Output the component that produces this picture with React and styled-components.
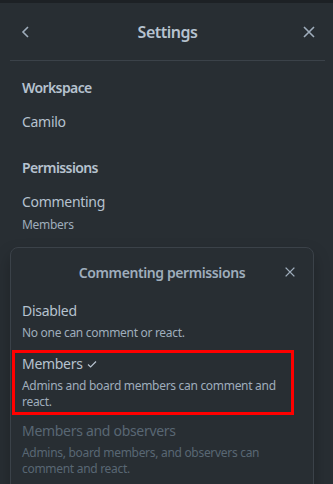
import React from 'react'
import styled, { createGlobalStyle } from 'styled-components'

const GlobalStyle = createGlobalStyle`
  body {
    margin: 0;
    background: #282e33;
    font-family: "Noto Sans", "Open Sans", sans-serif;
    color: #b6c2cf;
  }
`

const Panel = styled.div`
  width: 333px;
  height: 484px;
  overflow: hidden;
  background: #282e33;
  border-top: 3px solid #1d2125;
  box-sizing: border-box;
`

const Header = styled.div`
  height: 57px;
  display: flex;
  align-items: center;
  justify-content: space-between;
  margin: 0 8px 0 10px;
  border-bottom: 1px solid #3b4249;
`

const IconButton = styled.button`
  width: 32px;
  height: 32px;
  display: flex;
  align-items: center;
  justify-content: center;
  background: none;
  border: 0;
  padding: 0;
  color: #9fadbc;
`

const Title = styled.div`
  font-size: 16px;
  font-weight: 600;
  letter-spacing: -0.5px;
  color: #b6c2cf;
`

const Body = styled.div`
  padding: 17px 22px 0;
`

const SectionTitle = styled.div`
  font-size: 14px;
  line-height: 20px;
  font-weight: 600;
  letter-spacing: -0.6px;
  color: #b6c2cf;
  margin-top: ${(p) => (p.$first ? 0 : '26px')};
`

const Item = styled.div`
  font-size: 14px;
  line-height: 20px;
  letter-spacing: -0.3px;
  margin-top: 14px;
  color: #b6c2cf;
`

const Sub = styled.div`
  font-size: 12px;
  line-height: 16px;
  letter-spacing: -0.3px;
  margin-top: 5px;
  color: #9fadbc;
`

const Popover = styled.div`
  margin: 14px 19px 0 10px;
  border: 1px solid #3b4249;
  border-radius: 8px;
  background: #282e33;
  box-shadow: 0 8px 16px rgba(0, 0, 0, 0.25);
  height: 300px;
`

const PopHeader = styled.div`
  height: 48px;
  display: flex;
  align-items: center;
  justify-content: center;
  position: relative;
  font-size: 14px;
  font-weight: 600;
  letter-spacing: -0.4px;
  color: #9fadbc;
`

const PopClose = styled.span`
  position: absolute;
  right: 16px;
  top: 17px;
  display: flex;
  color: #9fadbc;
`

const Option = styled.div`
  margin: ${(p) => (p.$marked ? '4px 19px 1px 1px' : '0')};
  border: ${(p) => (p.$marked ? '3px solid #ff0000' : '0')};
  padding: ${(p) => (p.$marked ? '1px 7px 2px 7px' : '5px 10px 5px 11px')};
  color: ${(p) => (p.$disabled ? '#596773' : '#b6c2cf')};
`

const OptionName = styled.div`
  font-size: 14px;
  line-height: 20px;
  letter-spacing: -0.3px;
  display: flex;
  align-items: center;
  gap: 3px;
`

const OptionDesc = styled.div`
  font-size: 12px;
  line-height: 16px;
  letter-spacing: -0.3px;
  margin-top: 4px;
  color: ${(p) => (p.$disabled ? '#596773' : '#9fadbc')};
`

const Chevron = () => (
  <svg width="16" height="16" viewBox="0 0 16 16" fill="none">
    <path d="M10 3 5 8l5 5" stroke="currentColor" strokeWidth="1.6" />
  </svg>
)

const Cross = ({ size = 16 }) => (
  <svg width={size} height={size} viewBox="0 0 16 16" fill="none">
    <path d="M3 3l10 10M13 3 3 13" stroke="currentColor" strokeWidth="1.6" />
  </svg>
)

const Check = () => (
  <svg width="12" height="12" viewBox="0 0 12 12" fill="none">
    <path d="M2 6.5 4.6 9 10 3.5" stroke="currentColor" strokeWidth="1.2" />
  </svg>
)

const options = [
  { name: 'Disabled', desc: 'No one can comment or react.' },
  { name: 'Members', desc: 'Admins and board members can comment and react.', selected: true },
  {
    name: 'Members and observers',
    desc: 'Admins, board members, and observers can comment and react.',
    disabled: true,
  },
]

export default function App() {
  return (
    <>
      <GlobalStyle />
      <Panel>
        <Header>
          <IconButton><Chevron /></IconButton>
          <Title>Settings</Title>
          <IconButton><Cross /></IconButton>
        </Header>
        <Body>
          <SectionTitle $first>Workspace</SectionTitle>
          <Item>Camilo</Item>
          <SectionTitle>Permissions</SectionTitle>
          <Item>Commenting</Item>
          <Sub>Members</Sub>
        </Body>
        <Popover>
          <PopHeader>
            Commenting permissions
            <PopClose><Cross size={14} /></PopClose>
          </PopHeader>
          {options.map((o) => (
            <Option key={o.name} $marked={o.selected} $disabled={o.disabled}>
              <OptionName>
                {o.name}
                {o.selected && <Check />}
              </OptionName>
              <OptionDesc $disabled={o.disabled}>{o.desc}</OptionDesc>
            </Option>
          ))}
        </Popover>
      </Panel>
    </>
  )
}
